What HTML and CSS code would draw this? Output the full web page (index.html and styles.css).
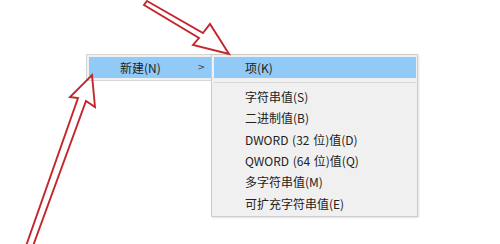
FILE: index.html
```html
<!DOCTYPE html>
<html>
<head>
<meta charset="utf-8">
<link rel="stylesheet" href="styles.css">
</head>
<body>
<div class="stage">
  <div class="parent-menu">
    <div class="item hot parent-item">
      <span class="label">新建(N)</span>
      <span class="chev">&gt;</span>
    </div>
  </div>
  <div class="submenu">
    <div class="item hot">项(K)</div>
    <div class="sep"></div>
    <div class="item">字符串值(S)</div>
    <div class="item">二进制值(B)</div>
    <div class="item">DWORD (32 位)值(D)</div>
    <div class="item">QWORD (64 位)值(Q)</div>
    <div class="item">多字符串值(M)</div>
    <div class="item">可扩充字符串值(E)</div>
  </div>
</div>
<svg class="arrows" width="500" height="244" viewBox="0 0 500 244">
  <polygon points="147,1 203,33 210,24 229,54 193,45 199,38 144,5" />
  <polygon points="92,75 95,107 86,101 33,246 26,246 78,98 70,97" />
</svg>
</body>
</html>
```

FILE: styles.css
```css
html, body {
  margin: 0;
  padding: 0;
  background: #ffffff;
  width: 500px;
  height: 244px;
  overflow: hidden;
}
body {
  font-family: "Noto Sans CJK SC", "Noto Sans", sans-serif;
  font-size: 12px;
  color: #222222;
  position: relative;
}
.stage {
  display: flex;
  align-items: flex-start;
  padding-top: 54px;
  padding-left: 86px;
}
.parent-menu {
  width: 122px;
  padding: 2px 0 2px 2px;
  background: #f0f0f0;
  border: 1px solid #d6d6d6;
  border-right: none;
}
.parent-item {
  display: flex;
  align-items: center;
  justify-content: space-between;
  padding-left: 31px;
  padding-right: 6px;
}
.chev {
  font-family: "DejaVu Sans", sans-serif;
  font-size: 9px;
  color: #444;
}
.submenu {
  width: 202px;
  padding: 2px 1px 2px 2px;
  background: #f0f0f0;
  border: 1px solid #cccccc;
  box-shadow: 1px 1px 2px rgba(0,0,0,0.12);
}
.item {
  height: 21.33px;
  line-height: 21.33px;
  padding-left: 31px;
  white-space: nowrap;
  word-spacing: 1px;
}
.hot {
  background: #91c9f7;
  height: 21px;
  line-height: 21px;
}
.sep {
  height: 8px;
  display: flex;
  align-items: center;
}
.sep::before {
  content: "";
  display: block;
  width: 100%;
  height: 1px;
  background: #d7d7d7;
}
.arrows {
  position: absolute;
  left: 0;
  top: 0;
  pointer-events: none;
}
.arrows polygon {
  fill: none;
  stroke: #c3262c;
  stroke-width: 1.9;
  stroke-linejoin: miter;
}
```
